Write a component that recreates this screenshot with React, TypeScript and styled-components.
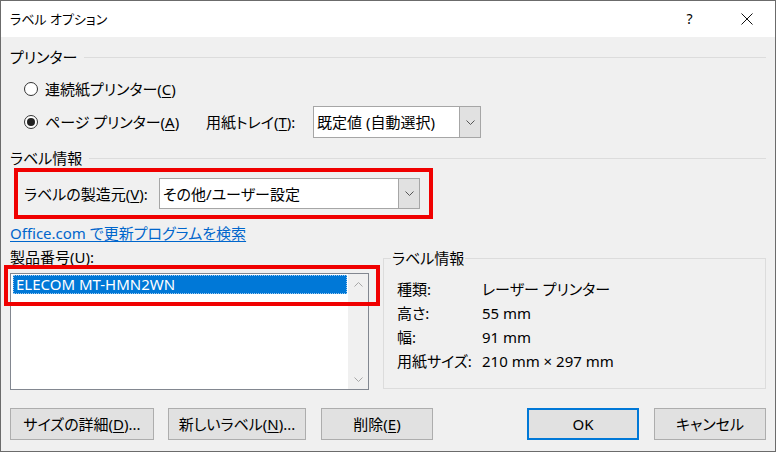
import React from "react";
import styled, { createGlobalStyle } from "styled-components";

const Global = createGlobalStyle`
  * { box-sizing: border-box; }
  html, body { margin: 0; padding: 0; background: #f0f0f0; }
  body {
    font-family: "Noto Sans", "Noto Sans CJK JP", sans-serif;
    font-feature-settings: "palt";
  }
`;

const Window = styled.div`
  position: relative;
  width: 776px;
  height: 452px;
  border: 1px solid #6b6b6b;
  background: #f0f0f0;
  display: flex;
  flex-direction: column;
  color: #000;
  font-size: 15px;
  line-height: 20px;
`;

const TitleBar = styled.div`
  height: 36px;
  flex: none;
  background: #fff;
  display: flex;
  align-items: center;
  padding-left: 9px;
  font-size: 13px;
`;

const TitleText = styled.div`
  flex: 1;
`;

const CaptionButton = styled.div`
  width: 57px;
  height: 36px;
  display: flex;
  align-items: center;
  justify-content: center;
  font-size: 14px;
`;

const Body = styled.div`
  flex: 1;
  display: flex;
  flex-direction: column;
  padding: 0 9px;
`;

const GroupHeader = styled.div<{ $top: number }>`
  margin-top: ${(p) => p.$top}px;
  height: 20px;
  display: flex;
  align-items: center;
  gap: 7px;
  &::after {
    content: "";
    flex: 1;
    height: 1px;
    background: #dcdcdc;
  }
`;

const Row = styled.div<{ $top: number; $h: number; $indent?: number }>`
  margin-top: ${(p) => p.$top}px;
  height: ${(p) => p.$h}px;
  display: flex;
  align-items: center;
  padding-left: ${(p) => p.$indent ?? 0}px;
`;

const RadioOption = styled.label<{ $w?: number }>`
  display: flex;
  align-items: center;
  gap: 7px;
  width: ${(p) => (p.$w ? `${p.$w}px` : "auto")};
`;

const RadioCircle = styled.span<{ $checked?: boolean }>`
  width: 14px;
  height: 14px;
  border-radius: 50%;
  border: 1px solid #333;
  background: #fff;
  display: flex;
  align-items: center;
  justify-content: center;
  &::after {
    content: "";
    width: 8px;
    height: 8px;
    border-radius: 50%;
    background: ${(p) => (p.$checked ? "#222" : "transparent")};
  }
`;

const Key = styled.span`
  text-decoration: underline;
  text-underline-offset: 2px;
`;

const FieldLabel = styled.span<{ $w: number }>`
  width: ${(p) => p.$w}px;
  flex: none;
`;

const SelectBox = styled.div<{ $w: number; $h: number }>`
  width: ${(p) => p.$w}px;
  height: ${(p) => p.$h}px;
  border: 1px solid #a6a6a6;
  background: #fff;
  display: flex;
`;

const SelectValue = styled.div`
  flex: 1;
  padding-left: 3px;
  display: flex;
  align-items: center;
`;

const DropButton = styled.div`
  width: 21px;
  background: #e1e1e1;
  border-left: 1px solid #a6a6a6;
  display: flex;
  align-items: center;
  justify-content: center;
`;

const Link = styled.a`
  color: #0066cc;
  text-decoration: underline;
  text-underline-offset: 2px;
`;

const Lower = styled.div`
  margin-top: 4px;
  display: flex;
  gap: 14px;
`;

const LeftCol = styled.div`
  width: 359px;
  display: flex;
  flex-direction: column;
`;

const ListBox = styled.div`
  margin-top: 6px;
  height: 117px;
  border: 1px solid #828790;
  background: #fff;
  display: flex;
`;

const ListItems = styled.div`
  flex: 1;
  padding: 1px 1px 1px 2px;
`;

const ListItem = styled.div<{ $selected?: boolean }>`
  height: 19px;
  line-height: 17px;
  padding-left: 2px;
  background: ${(p) => (p.$selected ? "#0078d7" : "transparent")};
  color: ${(p) => (p.$selected ? "#fff" : "#000")};
  border: 1px dotted ${(p) => (p.$selected ? "#9ccaf0" : "transparent")};
`;

const ScrollBar = styled.div`
  width: 20px;
  background: #f0f0f0;
  display: flex;
  flex-direction: column;
  justify-content: space-between;
`;

const ScrollArrow = styled.div`
  height: 20px;
  display: flex;
  align-items: center;
  justify-content: center;
`;

const InfoGroup = styled.div`
  position: relative;
  margin-top: 11px;
  width: 383px;
  height: 131px;
  border: 1px solid #dcdcdc;
  padding: 18px 0 0 13px;
`;

const Legend = styled.div`
  position: absolute;
  top: -11px;
  left: 7px;
  padding: 0 1px;
  background: #f0f0f0;
`;

const InfoRow = styled.div`
  height: 24px;
  display: flex;
  align-items: center;
`;

const InfoKey = styled.span`
  width: 85px;
`;

const ButtonRow = styled.div`
  margin-top: 18px;
  height: 32px;
  display: flex;
`;

const Button = styled.div<{ $w: number; $gap?: number; $default?: boolean }>`
  width: ${(p) => p.$w}px;
  margin-left: ${(p) => p.$gap ?? 0}px;
  height: 32px;
  background: #e1e1e1;
  border: ${(p) => (p.$default ? "2px solid #0078d7" : "1px solid #adadad")};
  display: flex;
  align-items: center;
  justify-content: center;
`;

const Spacer = styled.div`
  flex: 1;
`;

const RedBox = styled.div<{ $l: number; $t: number; $w: number; $h: number }>`
  position: absolute;
  left: ${(p) => p.$l}px;
  top: ${(p) => p.$t}px;
  width: ${(p) => p.$w}px;
  height: ${(p) => p.$h}px;
  border: 4px solid #f00000;
  pointer-events: none;
`;

const Chevron = ({ up = false, color = "#333" }: { up?: boolean; color?: string }) => (
  <svg width="9" height="5" viewBox="0 0 9 5">
    <polyline
      points={up ? "0.5,4.5 4.5,0.5 8.5,4.5" : "0.5,0.5 4.5,4.5 8.5,0.5"}
      fill="none"
      stroke={color}
      strokeWidth="1"
    />
  </svg>
);

const CloseIcon = () => (
  <svg width="12" height="12" viewBox="0 0 12 12">
    <path d="M0.5 0.5 L11.5 11.5 M11.5 0.5 L0.5 11.5" stroke="#111" strokeWidth="1" />
  </svg>
);

export default function App() {
  return (
    <>
      <Global />
      <Window>
        <TitleBar>
          <TitleText>ラベル オプション</TitleText>
          <CaptionButton>?</CaptionButton>
          <CaptionButton>
            <CloseIcon />
          </CaptionButton>
        </TitleBar>
        <Body>
          <GroupHeader $top={10}>プリンター</GroupHeader>
          <Row $top={10} $h={24} $indent={14}>
            <RadioOption>
              <RadioCircle />
              <span>
                連続紙プリンター(<Key>C</Key>)
              </span>
            </RadioOption>
          </Row>
          <Row $top={5} $h={32} $indent={14}>
            <RadioOption $w={182}>
              <RadioCircle $checked />
              <span>
                ページ プリンター(<Key>A</Key>)
              </span>
            </RadioOption>
            <FieldLabel $w={107}>
              用紙トレイ(<Key>T</Key>):
            </FieldLabel>
            <SelectBox $w={168} $h={32}>
              <SelectValue>既定値 (自動選択)</SelectValue>
              <DropButton>
                <Chevron color="#555" />
              </DropButton>
            </SelectBox>
          </Row>
          <GroupHeader $top={10}>ラベル情報</GroupHeader>
          <Row $top={10} $h={31} $indent={14}>
            <FieldLabel $w={135}>
              ラベルの製造元(<Key>V</Key>):
            </FieldLabel>
            <SelectBox $w={261} $h={31}>
              <SelectValue>その他/ユーザー設定</SelectValue>
              <DropButton>
                <Chevron color="#555" />
              </DropButton>
            </SelectBox>
          </Row>
          <Row $top={14} $h={20}>
            <Link>Office.com で更新プログラムを検索</Link>
          </Row>
          <Lower>
            <LeftCol>
              <span>
                製品番号(<Key>U</Key>):
              </span>
              <ListBox>
                <ListItems>
                  <ListItem $selected>ELECOM MT-HMN2WN</ListItem>
                </ListItems>
                <ScrollBar>
                  <ScrollArrow>
                    <Chevron up color="#a8a8a8" />
                  </ScrollArrow>
                  <ScrollArrow>
                    <Chevron color="#a8a8a8" />
                  </ScrollArrow>
                </ScrollBar>
              </ListBox>
            </LeftCol>
            <InfoGroup>
              <Legend>ラベル情報</Legend>
              <InfoRow>
                <InfoKey>種類:</InfoKey>
                <span>レーザー プリンター</span>
              </InfoRow>
              <InfoRow>
                <InfoKey>高さ:</InfoKey>
                <span>55 mm</span>
              </InfoRow>
              <InfoRow>
                <InfoKey>幅:</InfoKey>
                <span>91 mm</span>
              </InfoRow>
              <InfoRow>
                <InfoKey>用紙サイズ:</InfoKey>
                <span>210 mm × 297 mm</span>
              </InfoRow>
            </InfoGroup>
          </Lower>
          <ButtonRow>
            <Button $w={144}>
              サイズの詳細(<Key>D</Key>)...
            </Button>
            <Button $w={138} $gap={14}>
              新しいラベル(<Key>N</Key>)...
            </Button>
            <Button $w={112} $gap={15}>
              削除(<Key>E</Key>)
            </Button>
            <Spacer />
            <Button $w={112} $default>
              OK
            </Button>
            <Button $w={112} $gap={15}>
              キャンセル
            </Button>
          </ButtonRow>
        </Body>
        <RedBox $l={13} $t={167} $w={419} $h={51} />
        <RedBox $l={3} $t={264} $w={376} $h={41} />
      </Window>
    </>
  );
}
